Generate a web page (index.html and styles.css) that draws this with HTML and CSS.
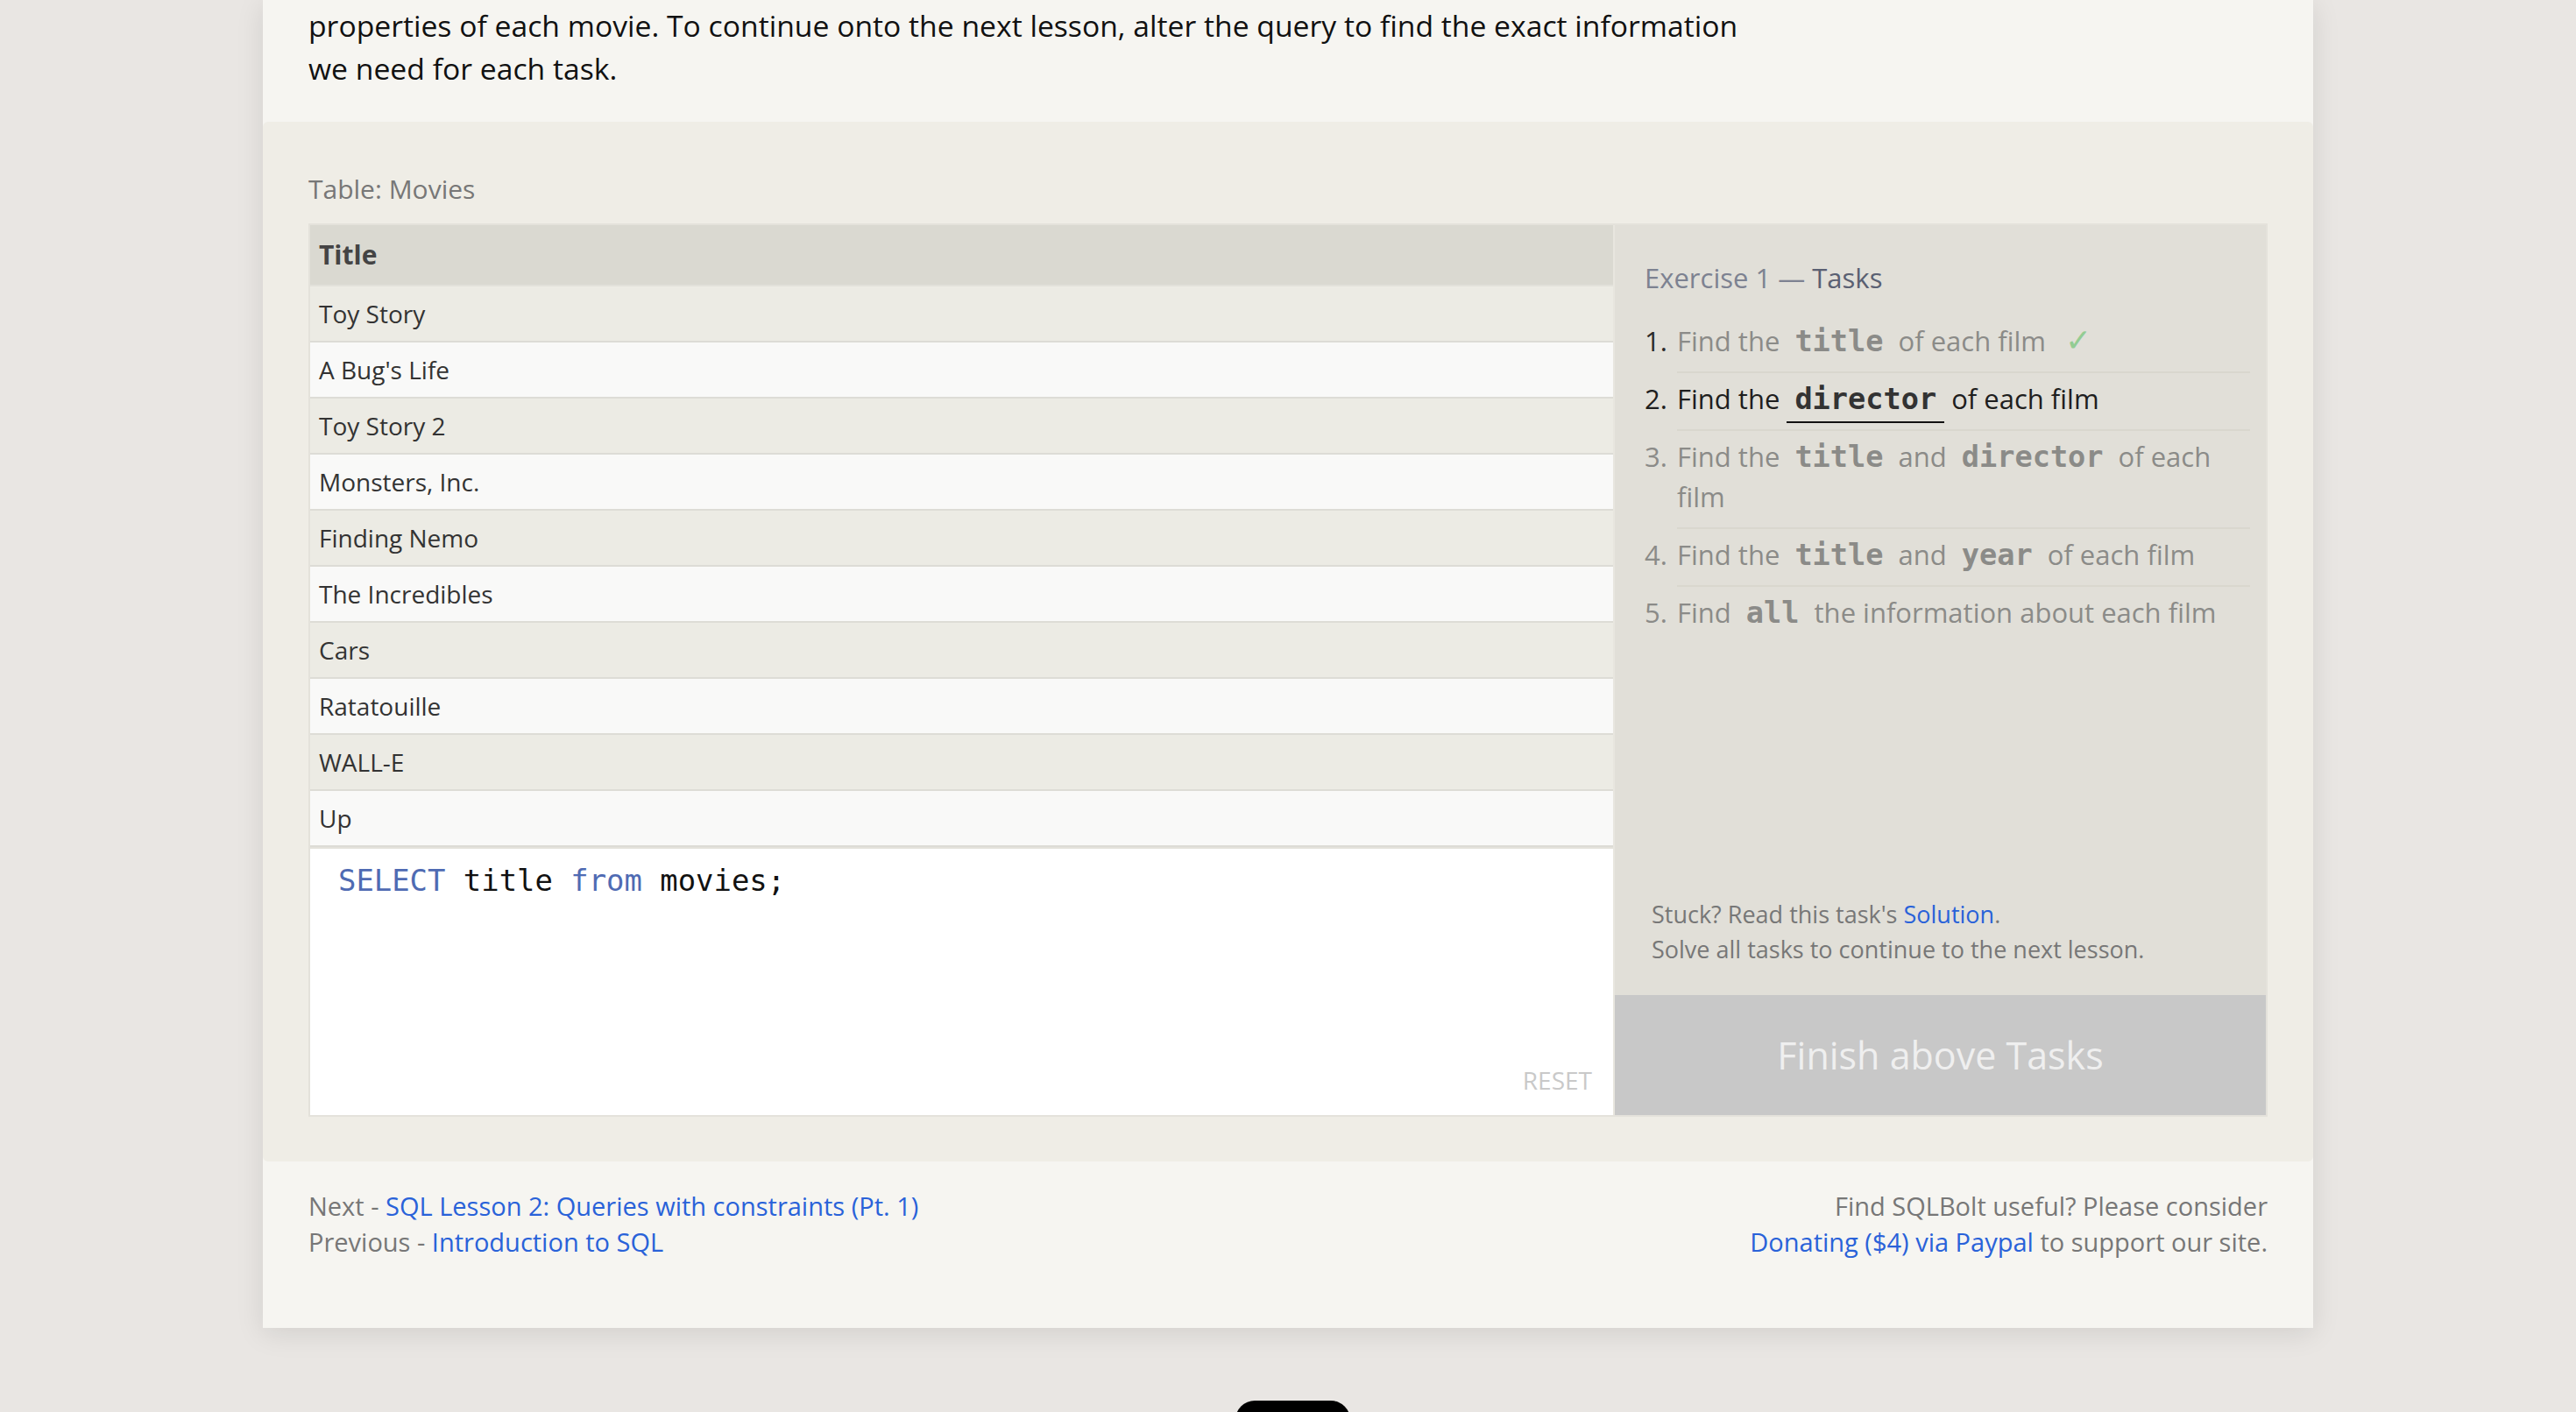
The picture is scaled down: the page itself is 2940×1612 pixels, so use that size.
FILE: index.html
```html
<!DOCTYPE html>
<html lang="en">
<head>
<meta charset="utf-8">
<title>SQLBolt - Lesson 1</title>
<link rel="stylesheet" href="styles.css">
</head>
<body>
<div class="card">
  <p class="intro">properties of each movie. To continue onto the next lesson, alter the query to find the exact information we need for each task.</p>

  <section class="exercise">
    <div class="table-label">Table: Movies</div>
    <div class="workspace">
      <div class="left">
        <div class="th">Title</div>
        <div class="tr odd">Toy Story</div>
        <div class="tr even">A Bug's Life</div>
        <div class="tr odd">Toy Story 2</div>
        <div class="tr even">Monsters, Inc.</div>
        <div class="tr odd">Finding Nemo</div>
        <div class="tr even">The Incredibles</div>
        <div class="tr odd">Cars</div>
        <div class="tr even">Ratatouille</div>
        <div class="tr odd">WALL-E</div>
        <div class="tr even">Up</div>
        <div class="editor">
          <div class="code"><span class="kw">SELECT</span> title <span class="kw">from</span> movies;</div>
          <span class="reset">RESET</span>
        </div>
      </div>
      <div class="panel">
        <div class="tasks">
          <h3 class="heading"><span class="ex">Exercise 1 —</span> <span class="tk">Tasks</span></h3>
          <ol class="list">
            <li class="done"><span class="num">1.</span><span class="txt">Find the <code class="c">title</code> of each film <span class="check">✓</span></span></li>
            <li class="active"><span class="num">2.</span><span class="txt">Find the <code class="c">director</code> of each film</span></li>
            <li class="todo"><span class="num">3.</span><span class="txt">Find the <code class="c">title</code> and <code class="c">director</code> of each film</span></li>
            <li class="todo"><span class="num">4.</span><span class="txt">Find the <code class="c">title</code> and <code class="c">year</code> of each film</span></li>
            <li class="todo"><span class="num">5.</span><span class="txt">Find <code class="c">all</code> the information about each film</span></li>
          </ol>
        </div>
        <div class="help">
          <div>Stuck? Read this task's <a href="#">Solution</a>.</div>
          <div>Solve all tasks to continue to the next lesson.</div>
        </div>
        <div class="finish">Finish above Tasks</div>
      </div>
    </div>
  </section>

  <footer class="foot">
    <div class="nav">
      <div>Next - <a href="#">SQL Lesson 2: Queries with constraints (Pt. 1)</a></div>
      <div>Previous - <a href="#">Introduction to SQL</a></div>
    </div>
    <div class="donate">
      <div>Find SQLBolt useful? Please consider</div>
      <div><a href="#">Donating ($4) via Paypal</a> to support our site.</div>
    </div>
  </footer>
</div>
<div class="pill">Back to Top</div>
</body>
</html>
```

FILE: styles.css
```css
* { box-sizing: border-box; }

html, body {
  margin: 0;
  height: 1612px;
  overflow: hidden;
}

body {
  background: #e9e6e3;
  font-family: "Open Sans", "Noto Sans", sans-serif;
}

a {
  color: #2962d9;
  text-decoration: none;
}

.card {
  width: 2340px;
  margin: 0 auto;
  background: #f6f5f1;
  box-shadow: 0 6px 30px rgba(0, 0, 0, 0.10);
}

.intro {
  margin: 0;
  padding: 5px 52px 0;
  width: 1764px;
  font-size: 33.7px;
  line-height: 49px;
  color: #111;
}

.exercise {
  margin-top: 36px;
  background: #efede6;
  border-radius: 6px;
  padding: 57px 52px 51px;
}

.table-label {
  font-size: 30px;
  line-height: 40px;
  color: #777;
  margin-bottom: 19px;
}

.workspace {
  display: flex;
  border: 2px solid #e4e2db;
}

.left {
  flex: 1;
  display: flex;
  flex-direction: column;
}

.th {
  height: 70px;
  line-height: 68px;
  background: #dad9d1;
  border-bottom: 2px solid #e2e1da;
  padding-left: 10px;
  font-size: 30px;
  font-weight: 700;
  color: #444;
}

.tr {
  height: 64px;
  line-height: 62px;
  border-bottom: 2px solid #dddcd6;
  padding-left: 10px;
  font-size: 28px;
  color: #333;
}

.tr.odd { background: #ecebe4; }
.tr.even { background: #f9f9f8; }

.editor {
  position: relative;
  height: 306px;
  background: #fff;
  border-top: 2px solid #e4e2db;
  padding: 13px 32px;
}

.code {
  font-family: "DejaVu Sans Mono", monospace;
  font-size: 33.9px;
  line-height: 48px;
  color: #111;
}

.kw { color: #4f6bb3; }

.reset {
  position: absolute;
  right: 24px;
  bottom: 26px;
  font-size: 28px;
  line-height: 1;
  color: #c9c9c9;
}

.panel {
  width: 745px;
  flex: none;
  border-left: 2px solid #e8e6df;
  background: #e1dfd8;
  display: flex;
  flex-direction: column;
}

.tasks {
  flex: 1;
  padding: 38px 18px 0 34px;
}

.heading {
  margin: 0 0 21px;
  font-size: 31px;
  line-height: 44px;
  font-weight: 400;
}

.heading .ex { color: #7d8291; }
.heading .tk { color: #5a6072; }

.list {
  list-style: none;
  margin: 0;
  padding: 0;
  font-size: 31px;
}

.list li {
  display: flex;
}

.num {
  width: 37px;
  flex: none;
  padding-top: 6px;
  line-height: 46px;
}

.txt {
  flex: 1;
  padding: 6px 0 12px;
  line-height: 46px;
  border-bottom: 2px solid #d9d7ce;
}

.list li:last-child .txt { border-bottom: none; }

.c {
  font-family: "DejaVu Sans Mono", monospace;
  font-weight: 700;
  font-size: 33.6px;
  line-height: 1;
  padding: 0 9px;
}

.done .num { color: #2a2a2a; }
.done .txt { color: #8b8b88; }
.active .num, .active .txt { color: #1e1e1e; }
.active .c {
  color: #333;
  border-bottom: 2px solid #111;
  padding-bottom: 6px;
}
.todo .num, .todo .txt { color: #8b8b88; }

.check {
  color: #93cc93;
  font-size: 36px;
  line-height: 1;
  margin-left: 14px;
}

.help {
  padding: 0 18px 32px 42px;
  font-size: 27px;
  line-height: 40px;
  color: #777;
}

.finish {
  height: 137px;
  background: #c8c8c8;
  color: #efefef;
  font-size: 43px;
  display: flex;
  align-items: center;
  justify-content: center;
}

.foot {
  display: flex;
  justify-content: space-between;
  padding: 30px 52px 78px;
  font-size: 29px;
  line-height: 41px;
  color: #777;
}

.donate { text-align: right; }

.pill {
  width: 131px;
  height: 52px;
  margin: 83px 0 0 calc(50% - 60px);
  background: #000;
  border-radius: 22px;
  color: #fff;
  font-size: 20px;
  line-height: 52px;
  text-align: center;
}
```
